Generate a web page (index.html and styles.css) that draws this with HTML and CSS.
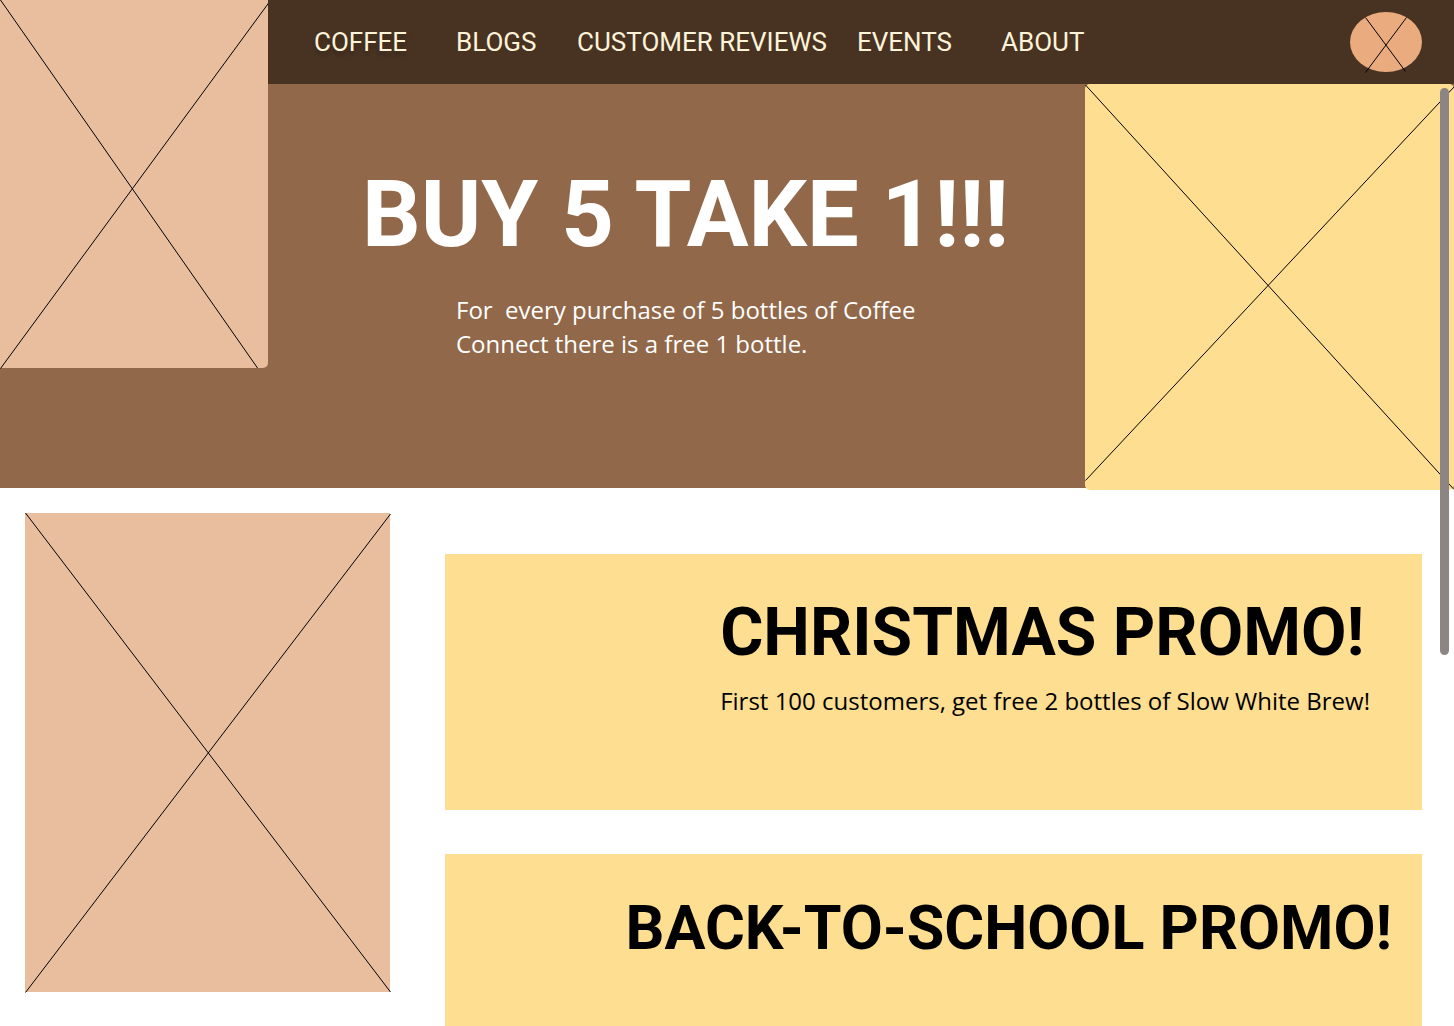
FILE: index.html
```html
<!DOCTYPE html>
<html lang="en">
<head>
<meta charset="utf-8">
<title>Coffee Connect</title>
<link rel="stylesheet" href="styles.css">
</head>
<body>
<div class="page">
  <header class="masthead">
    <svg class="logo" viewBox="0 0 268 368" preserveAspectRatio="none" role="img" aria-label="Logo">
      <path d="M0.500 0L257.500 368M269 2.500L0.500 368.500"/>
    </svg>
    <div class="bar">
      <nav class="nav" aria-label="Main">
        <a class="current" href="#coffee">COFFEE</a>
        <a href="#blogs">BLOGS</a>
        <a href="#reviews">CUSTOMER REVIEWS</a>
        <a href="#events">EVENTS</a>
        <a href="#about">ABOUT</a>
      </nav>
      <button class="avatar" type="button" aria-label="Account">
        <svg viewBox="0 0 72 60" aria-hidden="true">
          <ellipse cx="36" cy="30" rx="36" ry="30"/>
          <path d="M15.500 5.500L55.500 59.500M56.500 5.500L15.500 60.500"/>
        </svg>
      </button>
    </div>
    <section class="hero">
      <h1>BUY 5 TAKE 1!!!</h1>
      <p>For&nbsp; every purchase of 5 bottles of Coffee<br>Connect there is a free 1 bottle.</p>
    </section>
    <svg class="banner" viewBox="0 0 369 406" preserveAspectRatio="none" role="img" aria-label="Promo picture">
      <path d="M0.500 1L369 405.500M0.500 396.500L369 3"/>
    </svg>
  </header>
  <main class="content">
    <svg class="poster" viewBox="0 0 365 479" preserveAspectRatio="none" role="img" aria-label="Poster">
      <path d="M0.500 0L365.500 479M365.500 1L0.500 479.500"/>
    </svg>
    <div class="promos">
      <section class="promo">
        <div class="promo-text">
          <h2>CHRISTMAS PROMO!</h2>
          <p>First 100 customers, get free 2 bottles of Slow White Brew!</p>
        </div>
      </section>
      <section class="promo promo-wide">
        <div class="promo-text">
          <h2>BACK-TO-SCHOOL PROMO!</h2>
        </div>
      </section>
    </div>
  </main>
</div>
<div class="scroll-thumb" aria-hidden="true"></div>
</body>
</html>
```
FILE: styles.css
```css
* {
  box-sizing: border-box;
}

body,
h1,
h2,
p {
  margin: 0;
}

body {
  position: relative;
  background: #fff;
  color: #000;
  font-family: "Open Sans", sans-serif;
}

h1,
h2 {
  font-family: Roboto, sans-serif;
  font-weight: 700;
  white-space: nowrap;
}

.page {
  height: 100vh;
  overflow-y: auto;
  scrollbar-width: none;
}

svg {
  display: block;
  fill: none;
  stroke: #000;
  stroke-width: 1;
  overflow: visible;
}

.masthead {
  display: grid;
  grid-template-columns: 268px minmax(0, 1fr) 369px;
  grid-template-rows: 84px 404px;
  background: #916849;
}

.logo {
  grid-column: 1;
  grid-row: 1 / 3;
  width: 100%;
  height: 368px;
  background: #e9be9f;
  border-radius: 0 0 5px 0;
}

.bar {
  grid-column: 2 / 4;
  grid-row: 1;
  display: flex;
  align-items: center;
  justify-content: space-between;
  padding: 0 32px 0 46px;
  background: #483323;
}

.nav {
  display: grid;
  grid-template-columns: 142px 121px 280px 144px auto;
  font: 26px/30px Roboto, sans-serif;
}

.nav a {
  color: #fff3da;
  text-decoration: none;
  white-space: nowrap;
}

.nav .current {
  text-shadow: 0 4px 4px rgba(0, 0, 0, 0.25);
}

.avatar {
  width: 72px;
  height: 60px;
  padding: 0;
  border: 0;
  background: none;
}

.avatar ellipse {
  fill: #eaab7f;
  stroke: none;
}

.hero {
  grid-column: 2;
  grid-row: 2;
  padding: 73px 0 0 94px;
  color: #fff;
}

.hero h1 {
  font-size: 92px;
  line-height: 116px;
}

.hero p {
  padding: 20px 0 0 94px;
  font-size: 24px;
  line-height: 34px;
  white-space: nowrap;
}

.banner {
  grid-column: 3;
  grid-row: 2;
  width: 100%;
  height: 406px;
  background: #fede91;
  border-radius: 5px;
}

.content {
  display: grid;
  grid-template-columns: 365px minmax(0, 1fr);
  gap: 55px;
  align-items: start;
  padding: 25px 32px 34px 25px;
}

.poster {
  width: 100%;
  height: 479px;
  background: #e9be9f;
}

.promos {
  display: grid;
  gap: 44px;
  padding-top: 41px;
}

.promo {
  display: flex;
  justify-content: flex-end;
  min-height: 256px;
  padding: 38px 52px 36px 0;
  background: #fede91;
}

.promo-wide {
  padding-right: 30px;
}

.promo h2 {
  font-size: 66px;
  line-height: 82px;
}

.promo-wide h2 {
  font-size: 61px;
  line-height: 72px;
}

.promo p {
  padding-top: 10px;
  font-size: 24px;
  line-height: 34px;
  white-space: nowrap;
}

.scroll-thumb {
  position: absolute;
  top: 88px;
  right: 5px;
  width: 9px;
  height: 567px;
  background: #8c8584;
  border-radius: 5px;
}
```
